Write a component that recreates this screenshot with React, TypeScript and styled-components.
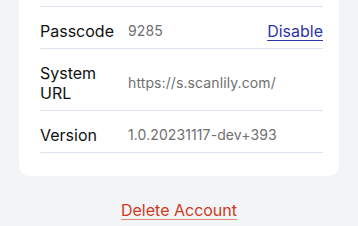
import React from "react";
import styled, { createGlobalStyle } from "styled-components";

const Global = createGlobalStyle`
  html, body { margin: 0; padding: 0; background: #f3f4f6; }
  body { font-family: Inter, "Noto Sans", "Liberation Sans", sans-serif; -webkit-font-smoothing: antialiased; }
`;

const Page = styled.div`
  width: 358px;
  height: 226px;
  overflow: hidden;
  background: #f3f4f6;
  display: flex;
  flex-direction: column;
  align-items: center;
`;

const Card = styled.div`
  box-sizing: border-box;
  width: 320px;
  margin-top: -20px;
  padding: 26px 16px 23px 21px;
  background: #ffffff;
  border-radius: 10px;
  display: flex;
  flex-direction: column;
`;

const TopRule = styled.div`
  height: 1px;
  background: #dbe3f1;
`;

const Row = styled.div`
  display: flex;
  align-items: center;
  padding: 14px 0 7px;
  border-bottom: 1px solid #dbe3f1;
`;

const Label = styled.div`
  width: 88px;
  flex: none;
  font-size: 16px;
  line-height: 20px;
  color: #111111;
`;

const Value = styled.div`
  flex: 1;
  font-size: 14px;
  line-height: 20px;
  color: #6f6f6f;
  letter-spacing: 0.1px;
`;

const Link = styled.a<{ $tone: "blue" | "red" }>`
  font-size: 16px;
  line-height: 20px;
  cursor: pointer;
  text-decoration: underline;
  text-underline-offset: 3px;
  text-decoration-thickness: 1px;
  color: ${(p) => (p.$tone === "blue" ? "#2b35a6" : "#cc3a22")};
  text-decoration-color: ${(p) => (p.$tone === "blue" ? "#2b35a6" : "#e08877")};
`;

const Footer = styled.div`
  margin-top: 24px;
  display: flex;
  justify-content: center;
`;

export default function App() {
  return (
    <>
      <Global />
      <Page>
        <Card>
          <TopRule />
          <Row>
            <Label>Passcode</Label>
            <Value>9285</Value>
            <Link $tone="blue">Disable</Link>
          </Row>
          <Row>
            <Label>
              System
              <br />
              URL
            </Label>
            <Value>https://s.scanlily.com/</Value>
          </Row>
          <Row>
            <Label>Version</Label>
            <Value>1.0.20231117-dev+393</Value>
          </Row>
        </Card>
        <Footer>
          <Link $tone="red">Delete Account</Link>
        </Footer>
      </Page>
    </>
  );
}
